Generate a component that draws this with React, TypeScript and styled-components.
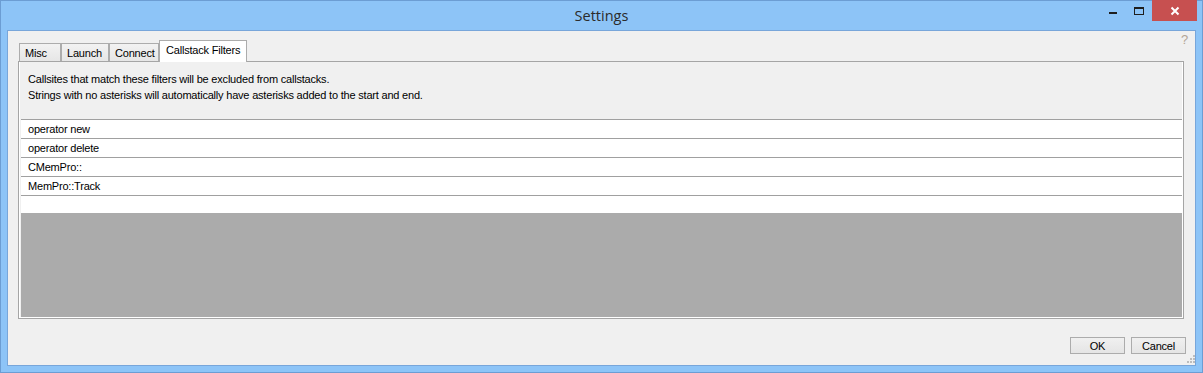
import React from "react";
import styled, { createGlobalStyle } from "styled-components";

const Global = createGlobalStyle`
  html, body { margin: 0; padding: 0; background: #8cc3f6; }
  * { box-sizing: border-box; }
`;

const Window = styled.div`
  width: 1203px;
  height: 373px;
  background: #8dc4f7;
  border: 1px solid #6c9dd3;
  display: flex;
  flex-direction: column;
  font-family: "Liberation Sans", Arial, sans-serif;
`;

const TitleBar = styled.div`
  height: 29px;
  position: relative;
  display: flex;
  align-items: center;
  justify-content: center;
`;

const Title = styled.div`
  font-family: "Open Sans", "Noto Sans", sans-serif;
  font-size: 14.5px;
  color: #2b2b2b;
  margin-top: -1px;
`;

const Controls = styled.div`
  position: absolute;
  right: 5px;
  top: -1px;
  display: flex;
  align-items: flex-start;
`;

const CtrlButton = styled.div<{ $w: number; $close?: boolean }>`
  width: ${(p) => p.$w}px;
  height: 21px;
  display: flex;
  align-items: center;
  justify-content: center;
  background: ${(p) => (p.$close ? "#c75050" : "transparent")};
`;

const Client = styled.div`
  flex: 1;
  margin: 0 6px 6px 6px;
  border: 1px solid #78a6da;
  background: #f0f0f0;
  display: flex;
  flex-direction: column;
  padding: 10px 10px 0 10px;
  position: relative;
  letter-spacing: -0.2px;
`;

const Help = styled.div`
  position: absolute;
  right: 7px;
  top: 1px;
  font-family: "Liberation Sans", Arial, sans-serif;
  font-size: 13px;
  color: #b3a596;
`;

const TabStrip = styled.div`
  height: 20px;
  display: flex;
  align-items: flex-end;
  padding-left: 1px;
`;

const Tab = styled.div<{ $w: number; $active?: boolean }>`
  width: ${(p) => p.$w}px;
  height: ${(p) => (p.$active ? 22 : 18)}px;
  margin-bottom: ${(p) => (p.$active ? -1 : 0)}px;
  position: relative;
  z-index: ${(p) => (p.$active ? 1 : 0)};
  border: 1px solid #acacac;
  border-bottom: none;
  background: ${(p) =>
    p.$active ? "#ffffff" : "linear-gradient(#f2f2f2, #e6e6e6)"};
  font-size: 11px;
  color: #000;
  display: flex;
  align-items: ${(p) => (p.$active ? "flex-start" : "center")};
  padding-top: ${(p) => (p.$active ? 3 : 1)}px;
  padding-left: ${(p) => (p.$active ? 6 : 5)}px;
  white-space: nowrap;
`;

const Panel = styled.div`
  height: 258px;
  border: 1px solid #a5a5a5;
  box-shadow: inset 1px 0 0 #fff, inset -1px -1px 0 #fff;
  padding: 0 1px 1px 2px;
  display: flex;
  flex-direction: column;
  margin-right: 1px;
`;

const Desc = styled.div`
  height: 57px;
  padding: 9px 7px 0;
  font-size: 11px;
  line-height: 16px;
  color: #000;
`;

const List = styled.div`
  flex: 1;
  display: flex;
  flex-direction: column;
  border-top: 1px solid #a0a0a0;
`;

const Row = styled.div`
  height: 19px;
  line-height: 18px;
  border-bottom: 1px solid #a0a0a0;
  background: #fff;
  padding-left: 7px;
  font-size: 11px;
  color: #000;
`;

const EmptyRow = styled.div`
  height: 17px;
  background: #fff;
`;

const GrayFill = styled.div`
  flex: 1;
  background: #ababab;
`;

const Footer = styled.div`
  flex: 1;
  display: flex;
  justify-content: flex-end;
  align-items: flex-start;
  gap: 6px;
  padding: 18px 0 0 0;
  margin-right: -1px;
  position: relative;
`;

const Button = styled.div`
  width: 55px;
  height: 17px;
  border: 1px solid #acacac;
  background: linear-gradient(#f0f0f0, #e5e5e5);
  font-size: 11px;
  display: flex;
  align-items: center;
  justify-content: center;
  color: #000;
`;

const Grip = styled.svg`
  position: absolute;
  right: -9px;
  bottom: 1px;
`;

const rows = ["operator new", "operator delete", "CMemPro::", "MemPro::Track"];

export default function App() {
  return (
    <>
      <Global />
      <Window>
        <TitleBar>
          <Title>Settings</Title>
          <Controls>
            <CtrlButton $w={26}>
              <svg width="10" height="10" viewBox="0 0 10 10">
                <rect x="1" y="6" width="8" height="2" fill="#1e1e1e" />
              </svg>
            </CtrlButton>
            <CtrlButton $w={26}>
              <svg width="12" height="12" viewBox="0 0 12 12">
                <rect x="1.5" y="2.5" width="9" height="7" fill="none" stroke="#1e1e1e" strokeWidth="1" />
                <rect x="1" y="2" width="10" height="2" fill="#1e1e1e" />
              </svg>
            </CtrlButton>
            <CtrlButton $w={45} $close>
              <svg width="10" height="10" viewBox="0 0 10 10">
                <path d="M1.5 1.5 L8.5 8.5 M8.5 1.5 L1.5 8.5" stroke="#fff" strokeWidth="2" />
              </svg>
            </CtrlButton>
          </Controls>
        </TitleBar>
        <Client>
          <Help>?</Help>
          <TabStrip>
            <Tab $w={42}>Misc</Tab>
            <Tab $w={48}>Launch</Tab>
            <Tab $w={50}>Connect</Tab>
            <Tab $w={88} $active>Callstack Filters</Tab>
          </TabStrip>
          <Panel>
            <Desc>
              Callsites that match these filters will be excluded from callstacks.
              <br />
              Strings with no asterisks will automatically have asterisks added to the start and end.
            </Desc>
            <List>
              {rows.map((r) => (
                <Row key={r}>{r}</Row>
              ))}
              <EmptyRow />
              <GrayFill />
            </List>
          </Panel>
          <Footer>
            <Button>OK</Button>
            <Button>Cancel</Button>
            <Grip width="10" height="10" viewBox="0 0 10 10">
              {[
                [8, 0], [8, 3], [5, 3], [8, 6], [5, 6], [2, 6],
              ].map(([x, y], i) => (
                <rect key={i} x={x} y={y + 1} width="2" height="2" fill="#bdbdbd" />
              ))}
            </Grip>
          </Footer>
        </Client>
      </Window>
    </>
  );
}
